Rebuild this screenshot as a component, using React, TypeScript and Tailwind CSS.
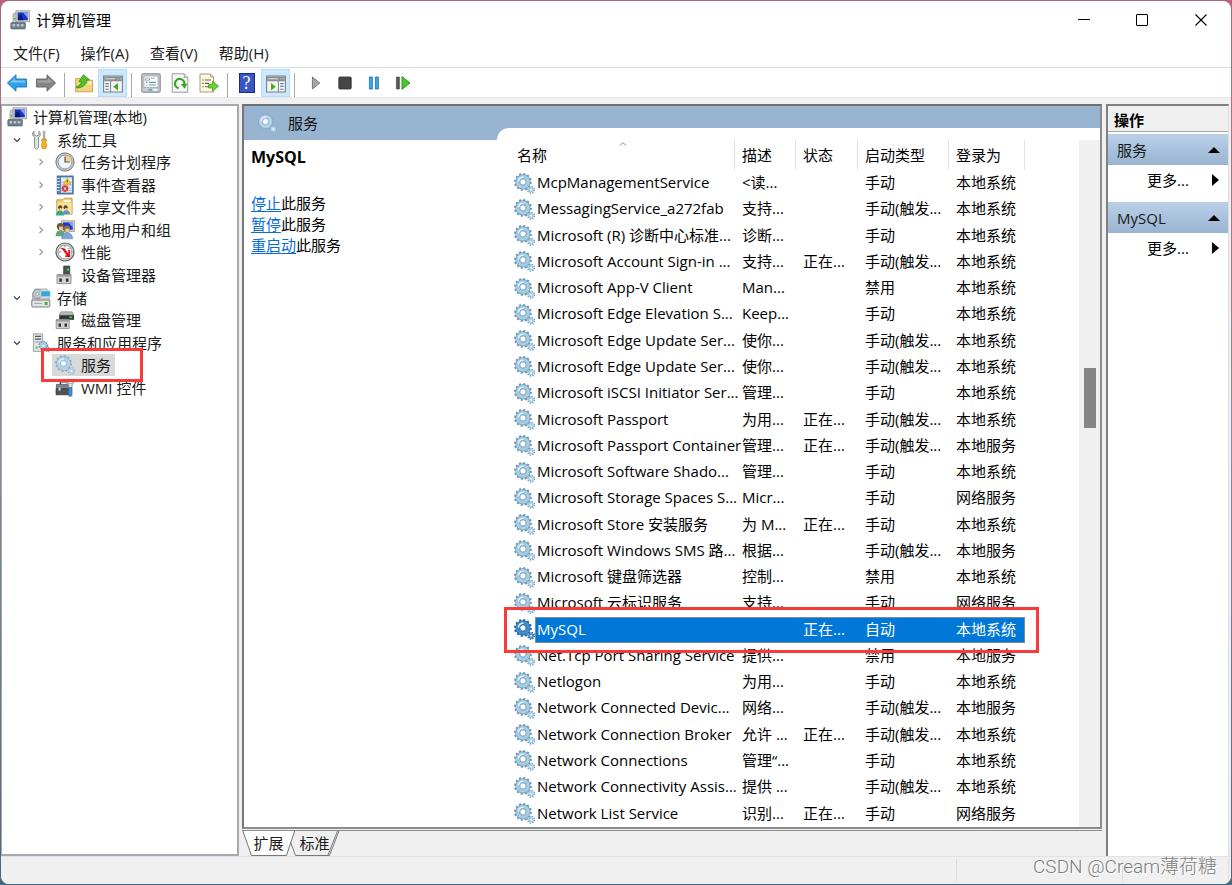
import React from 'react';
import clsx from 'clsx';

interface Service {
  name: string;
  desc: string;
  status?: string;
  startup: string;
  logon: string;
}

interface TreeNode {
  label: string;
  depth: 0 | 1 | 2;
  icon: React.ReactNode;
  open?: boolean;
  closed?: boolean;
  selected?: boolean;
}

const MANUAL = '手动';
const TRIGGER = '手动(触发...';
const RUNNING = '正在...';
const SYSTEM = '本地系统';
const LOCAL = '本地服务';
const NETWORK = '网络服务';

const services: Service[] = [
  { name: 'McpManagementService', desc: '<读...', startup: MANUAL, logon: SYSTEM },
  { name: 'MessagingService_a272fab', desc: '支持...', startup: TRIGGER, logon: SYSTEM },
  { name: 'Microsoft (R) 诊断中心标准...', desc: '诊断...', startup: MANUAL, logon: SYSTEM },
  { name: 'Microsoft Account Sign-in ...', desc: '支持...', status: RUNNING, startup: TRIGGER, logon: SYSTEM },
  { name: 'Microsoft App-V Client', desc: 'Man...', startup: '禁用', logon: SYSTEM },
  { name: 'Microsoft Edge Elevation S...', desc: 'Keep...', startup: MANUAL, logon: SYSTEM },
  { name: 'Microsoft Edge Update Ser...', desc: '使你...', startup: TRIGGER, logon: SYSTEM },
  { name: 'Microsoft Edge Update Ser...', desc: '使你...', startup: TRIGGER, logon: SYSTEM },
  { name: 'Microsoft iSCSI Initiator Ser...', desc: '管理...', startup: MANUAL, logon: SYSTEM },
  { name: 'Microsoft Passport', desc: '为用...', status: RUNNING, startup: TRIGGER, logon: SYSTEM },
  { name: 'Microsoft Passport Container', desc: '管理...', status: RUNNING, startup: TRIGGER, logon: LOCAL },
  { name: 'Microsoft Software Shado...', desc: '管理...', startup: MANUAL, logon: SYSTEM },
  { name: 'Microsoft Storage Spaces S...', desc: 'Micr...', startup: MANUAL, logon: NETWORK },
  { name: 'Microsoft Store 安装服务', desc: '为 M...', status: RUNNING, startup: MANUAL, logon: SYSTEM },
  { name: 'Microsoft Windows SMS 路...', desc: '根据...', startup: TRIGGER, logon: LOCAL },
  { name: 'Microsoft 键盘筛选器', desc: '控制...', startup: '禁用', logon: SYSTEM },
  { name: 'Microsoft 云标识服务', desc: '支持...', startup: MANUAL, logon: NETWORK },
  { name: 'MySQL', desc: '', status: RUNNING, startup: '自动', logon: SYSTEM },
  { name: 'Net.Tcp Port Sharing Service', desc: '提供...', startup: '禁用', logon: LOCAL },
  { name: 'Netlogon', desc: '为用...', startup: MANUAL, logon: SYSTEM },
  { name: 'Network Connected Devic...', desc: '网络...', startup: TRIGGER, logon: LOCAL },
  { name: 'Network Connection Broker', desc: '允许 ...', status: RUNNING, startup: TRIGGER, logon: SYSTEM },
  { name: 'Network Connections', desc: '管理“...', startup: MANUAL, logon: SYSTEM },
  { name: 'Network Connectivity Assis...', desc: '提供 ...', startup: TRIGGER, logon: SYSTEM },
  { name: 'Network List Service', desc: '识别...', status: RUNNING, startup: MANUAL, logon: NETWORK },
];

const Svg = ({ children, className = 'size-5' }: { children: React.ReactNode; className?: string }) => (
  <svg viewBox="0 0 20 20" className={clsx('shrink-0', className)} aria-hidden="true">
    {children}
  </svg>
);

// Large gear with a small one at the lower right
const GearIcon = ({ active, pale, className }: { active?: boolean; pale?: boolean; className?: string }) => {
  const body = active ? '#3f8fce' : pale ? '#b3d3ea' : '#a5cde6';
  const edge = active ? '#24659f' : pale ? '#88aecb' : '#6f98b3';
  return (
    <Svg className={className}>
      <circle cx="8.5" cy="8.5" r="7.5" fill="none" stroke={edge} strokeWidth="2" strokeDasharray="2 1.93" />
      <circle cx="8.5" cy="8.5" r="5" fill="none" stroke={edge} strokeWidth="4.4" />
      <circle cx="8.5" cy="8.5" r="4.9" fill="none" stroke={body} strokeWidth="3.4" />
      <path d="M4.2 8A4.5 4.5 0 0 1 9 4" fill="none" stroke="#e0f2fb" strokeWidth="1.5" />
      <circle cx="8.5" cy="8.5" r="2.9" fill={active ? '#f4faff' : '#fff'} stroke={edge} strokeWidth="0.7" />
      <circle cx="16.3" cy="16" r="3.1" fill="none" stroke={edge} strokeWidth="1.5" strokeDasharray="1.2 1.23" />
      <circle cx="16.3" cy="16" r="1.8" fill="#fff" stroke={body} strokeWidth="1.8" />
    </Svg>
  );
};

const ComputerIcon = () => (
  <Svg>
    <path d="M3 4l4-2v13H3z" fill="#c9cdc8" stroke="#8d918d" strokeWidth="0.7" />
    <rect x="6" y="0.8" width="13.4" height="11" fill="#d9d9d2" stroke="#96968f" strokeWidth="0.8" />
    <rect x="7.6" y="2.4" width="10.2" height="7.8" fill="#1a35c8" />
    <path d="M13 2.4h4.8v5.5z" fill="#88a7f5" />
    <path d="M8 10.2c0-4 1.8-6 3.6-6l2 6z" fill="#0b1a6e" />
    <path d="M11 11.8h4l1 3h-6z" fill="#b3b5b2" />
    <rect x="0.8" y="12.6" width="14.5" height="6.4" rx="0.8" fill="#6d7d88" stroke="#4b5860" strokeWidth="0.6" />
    <path d="M2.5 14h2.6v2.6H2.5zM6.7 14h2.6v2.6H6.7zM10.9 14h2.6v2.6h-2.6z" fill="#b9c6cd" />
    <path d="M3.8 8h1.4v1.6H3.8z" fill="#3bb54a" />
  </Svg>
);

const ToolsIcon = () => (
  <Svg>
    <path
      d="M3 1.2C1.8 2.2 1.3 3.6 1.8 5c.3 1 1 1.7 1.8 2.1V17c0 2.6 4 2.6 4 0V7.1C9.6 6 10 3 7.9 1.2v3.6L5.5 6 3 4.8z"
      fill="#dfe3e4"
      stroke="#7d8385"
      strokeWidth="0.9"
    />
    <path d="M12.3 1.2h1.6V9h-1.6z" fill="#b9bec0" stroke="#83898b" strokeWidth="0.6" />
    <path d="M10.8 9.2h4.6v2.2l-.9 1.2.9 1.2v3.6c0 1.8-4.6 1.8-4.6 0v-3.6l.9-1.2-.9-1.2z" fill="#f8b21c" stroke="#c37e05" strokeWidth="0.7" />
  </Svg>
);

const ClockIcon = () => (
  <Svg>
    <circle cx="10" cy="10" r="9.1" fill="#c7c7c7" stroke="#777" strokeWidth="1" />
    <circle cx="10" cy="10" r="6.9" fill="#eef5fb" stroke="#8c8c8c" strokeWidth="0.8" />
    <path d="M10 3.4A6.6 6.6 0 0 1 16.6 10H10z" fill="#f7cf86" />
    <path d="M10 4.6V10h4.6" fill="none" stroke="#47535d" strokeWidth="1.2" />
  </Svg>
);

const EventIcon = () => (
  <Svg>
    <rect x="2.2" y="1" width="16" height="18" fill="#5d83b5" stroke="#3b5d8b" strokeWidth="0.8" />
    <rect x="6" y="2.4" width="11" height="15.2" fill="#e2ecf8" />
    <path d="M6 7.2h11M6 10h11M6 13h11M6 15.6h11" stroke="#8fb0da" strokeWidth="0.8" />
    <path d="M1.2 3.5h3.4M1.2 6.5h3.4M1.2 9.5h3.4M1.2 12.5h3.4M1.2 15.5h3.4" stroke="#d5dde6" strokeWidth="1.2" />
    <path d="M12.2 3l3.8 6.2H8.4z" fill="#ffd81f" stroke="#bd9000" strokeWidth="0.6" />
    <path d="M12.2 5v2.6" stroke="#333" strokeWidth="0.9" />
    <circle cx="10" cy="13.6" r="3.3" fill="#dd3636" />
    <path d="M8.7 12.3l2.6 2.6m0-2.6l-2.6 2.6" stroke="#fff" strokeWidth="1" />
  </Svg>
);

const SharedIcon = () => (
  <Svg>
    <path d="M1.8 2.8h6l1.5-1.6h7.8v16H1.8z" fill="#f2cf72" stroke="#b48f38" strokeWidth="0.8" />
    <path d="M8.6 3h7.4v2H8.6z" fill="#fff8df" />
    <path d="M2.4 5.8h14.2v11H2.4z" fill="#fbe29b" />
    <circle cx="5.2" cy="10.4" r="2.1" fill="#5c4631" />
    <circle cx="10.6" cy="10.4" r="2.1" fill="#5c4631" />
    <path d="M4.6 11h2v2h-2zM10 11h2v2h-2z" fill="#edbf93" />
    <path d="M1 18.4c0-6.4 8-6.4 8 0z" fill="#35a884" />
    <path d="M7.6 17c.2-5.2 7.4-5 7.4 0z" fill="#5698cf" />
  </Svg>
);

const UsersIcon = () => (
  <Svg>
    <rect x="6.4" y="0.8" width="13" height="10.6" fill="#dadad4" stroke="#96968f" strokeWidth="0.8" />
    <rect x="8" y="2.4" width="9.8" height="7.4" fill="#1936cf" />
    <path d="M13.4 2.4h4.4v5z" fill="#8aa8f4" />
    <circle cx="5.4" cy="6.6" r="3.6" fill="#6b5b38" />
    <path d="M4 6.4h4v3.8H4z" fill="#ebc08f" />
    <path d="M0.6 16.2c0-8 9.6-8 9.6 0z" fill="#64a37c" />
    <circle cx="11.8" cy="8.8" r="3.4" fill="#8d6f49" />
    <path d="M10.4 8.8h4v3.6h-4z" fill="#f0c89d" />
    <path d="M6.6 18.8c0-8.4 11-8.4 11 0z" fill="#7ba7d6" stroke="#527fae" strokeWidth="0.5" />
  </Svg>
);

const GaugeIcon = () => (
  <Svg>
    <circle cx="10" cy="10" r="9" fill="#d5d5d5" stroke="#5f5f5f" strokeWidth="1.2" />
    <circle cx="10" cy="10" r="6.9" fill="#fff" stroke="#8a8a8a" strokeWidth="0.8" />
    <path d="M5.6 6l1 1M4.2 10h1.5M14.4 6l-1 1M15.8 10h-1.5M10 3.8v1.5" stroke="#444" strokeWidth="0.8" />
    <path d="M5.8 5.4l4 1 3.4 5V8h1.8v7h-4.4l-.6-1.6 1.6-.2z" fill="#e0161b" />
  </Svg>
);

const DeviceIcon = () => (
  <Svg>
    <path d="M8.6 1h6.2v10H8.6z" fill="#4c4f50" stroke="#2e3031" strokeWidth="0.6" />
    <path d="M11.6 3.6H14v2h-2.4z" fill="#4ae03c" />
    <path d="M2 9.6h14v9H2z" fill="#cfd0d0" stroke="#808282" strokeWidth="0.8" />
    <path d="M2 9.6h14v2H2z" fill="#9a9c9c" />
    <path d="M4.4 13.4h2.4v3.4H4.4zM11 13.4h2.4v3.4H11z" fill="#2c2f31" />
  </Svg>
);

const StorageIcon = () => (
  <Svg>
    <path d="M2 5l2-4h12l2.4 10H1.4z" fill="#d6d9da" stroke="#989c9e" strokeWidth="0.8" />
    <circle cx="6.4" cy="6" r="4.6" fill="#bfc5c8" stroke="#7f868a" strokeWidth="0.8" />
    <circle cx="6.4" cy="6" r="1.5" fill="#fff" stroke="#7f868a" strokeWidth="0.6" />
    <path d="M9.8 2.8h9.6v6H9.8z" fill="#39a7d2" stroke="#e4f2f8" strokeWidth="0.6" />
    <path d="M0.8 12h18v6.2c0 .5-.5.8-1 .8H1.8c-.5 0-1-.3-1-.8z" fill="#e3e5e5" stroke="#6d7072" strokeWidth="0.9" />
    <path d="M13.6 14h3v3h-3z" fill="#4fae2c" />
    <path d="M3 15.4h8" stroke="#a1a4a5" strokeWidth="1" />
  </Svg>
);

const DiskIcon = () => (
  <Svg>
    <path d="M5.6 1.8h11.6l1.6 3.4H4.2z" fill="#b6b9ba" stroke="#808384" strokeWidth="0.6" />
    <path d="M4.2 5.2h14.8v4.6H4.2z" fill="#323637" />
    <path d="M14.4 6.4h2.8v1.8h-2.8z" fill="#44d63a" />
    <path d="M1.2 9.6h13v9h-13z" fill="#d0d1d1" stroke="#808282" strokeWidth="0.8" />
    <path d="M1.2 9.6h13v2h-13z" fill="#9a9c9c" />
    <path d="M3.6 13.4H6v3.4H3.6zM9.6 13.4H12v3.4H9.6z" fill="#2c2f31" />
  </Svg>
);

const ServerIcon = () => (
  <Svg>
    <path d="M2.4 0.8h9v17.6h-9z" fill="#e0e4e6" stroke="#8a9195" strokeWidth="0.8" />
    <path d="M4 3.4h6M4 6.2h6" stroke="#52585c" strokeWidth="1.2" />
    <path d="M4 9h6" stroke="#9ba2a6" strokeWidth="1" />
    <path d="M4.6 13.6h2v2h-2z" fill="#48b83c" />
    <circle cx="12.4" cy="12.6" r="4" fill="#b6d5ea" stroke="#6997ba" strokeWidth="1.6" strokeDasharray="1.6 1" />
    <circle cx="12.4" cy="12.6" r="1.6" fill="#fff" stroke="#6997ba" strokeWidth="0.6" />
    <circle cx="16.8" cy="16.6" r="2.2" fill="#dcecf6" stroke="#6997ba" strokeWidth="1.3" strokeDasharray="1.1 0.8" />
  </Svg>
);

const WmiIcon = () => (
  <Svg>
    <path d="M5.4 6.4V3.6h7.2v2.8" fill="none" stroke="#43494c" strokeWidth="1.6" />
    <path d="M1.4 6.4h15v4.4h-15z" fill="#7b8387" stroke="#474d50" strokeWidth="0.7" />
    <path d="M1 10.8h15.6v6H1z" fill="#4d5456" stroke="#33383a" strokeWidth="0.7" />
    <path d="M3.6 9.6h2v3h-2z" fill="#d6dadb" />
    <path d="M13 1.4c-1.6 1.8-1.4 4.4.6 5.4v3h3.4v-3c2-1 2.4-3.6.6-5.4v3.2l-2.2 1-2.2-1z" fill="#dfe4e6" stroke="#7d8385" strokeWidth="0.7" />
    <path d="M13.6 9.6H17v7.2c0 2.4-3.4 2.4-3.4 0z" fill="#4b8cd2" stroke="#2c62a0" strokeWidth="0.6" />
  </Svg>
);

const BackIcon = () => (
  <Svg>
    <path d="M0.4 10L9 1.8V6h10.6v8H9v4.2z" fill="#2e9fe8" stroke="#1a73b8" strokeWidth="0.9" />
    <path d="M3 9.6l5-4.6v2.4h10.2v2.2z" fill="#7cc8fa" />
  </Svg>
);

const ForwardIcon = () => (
  <Svg>
    <path d="M19.6 10L11 1.8V6H0.4v8H11v4.2z" fill="#858585" stroke="#606060" strokeWidth="0.9" />
    <path d="M17 9.6l-5-4.6v2.4H1.6v2.2z" fill="#a3a3a3" />
  </Svg>
);

const FolderUpIcon = () => (
  <Svg>
    <path d="M1.6 5.4h5l1.4 1.8h10.6v11.6h-17z" fill="#f3d27c" stroke="#b78c31" strokeWidth="0.7" />
    <path d="M14.6 8.4h2.8v3h-2.8z" fill="#fff6dc" />
    <path d="M2.6 13.4c3-.4 4.4-2.2 4.8-4.8H4.8l4.6-6.8 6 4.8-2.6.6c-.6 4.6-4.2 7.8-10.2 7.8z" fill="#4fc22c" stroke="#2c8712" strokeWidth="0.7" />
  </Svg>
);

const PaneIcon = ({ flip }: { flip?: boolean }) => (
  <Svg>
    <path d="M0.6 3h18.8v16H0.6z" fill="#f4f4f4" stroke="#7b8083" strokeWidth="1.1" />
    <path d="M1.2 3.6h17.6v4.6H1.2z" fill="#868c90" />
    <path d="M2.4 5.8h10M14.6 5.8h1M16.8 5.8h1" stroke="#e6e9ea" strokeWidth="1" />
    {flip ? (
      <>
        <path d="M12.4 8v11" stroke="#7b8083" strokeWidth="1" />
        <path d="M14.2 10.6h3.4M14.2 13.4h3.4M14.2 16.2h3.4" stroke="#5582b4" strokeWidth="1.1" />
        <path d="M5 10v7.4l4.8-3.7z" fill="#3fae1d" />
      </>
    ) : (
      <>
        <path d="M7.6 8v11" stroke="#7b8083" strokeWidth="1" />
        <path d="M2.4 10.6h3.4M2.4 13.4h3.4M2.4 16.2h3.4" stroke="#5582b4" strokeWidth="1.1" />
        <path d="M15 10v7.4l-4.8-3.7z" fill="#3fae1d" />
      </>
    )}
  </Svg>
);

const PropertiesIcon = () => (
  <Svg>
    <rect x="0.8" y="0.8" width="18.4" height="18.4" rx="1.2" fill="#c9ced2" stroke="#7b8083" strokeWidth="1" />
    <path d="M3 3h14v11.6H3z" fill="#fff" stroke="#90989e" strokeWidth="0.7" />
    <path d="M4.6 5.2h4v2h-4zM10 5.2h4" stroke="#90989e" strokeWidth="0.8" fill="none" />
    <path d="M5 9.4h1.6M8 9.4h7M5 12h1.6M8 12h7" stroke="#6d94c0" strokeWidth="1.1" />
    <path d="M7.4 16h3.6v1.8H7.4z" fill="#39a8e0" />
    <path d="M12.4 16H16v1.8h-3.6z" fill="#f4f6f7" />
  </Svg>
);

const RefreshIcon = () => (
  <Svg>
    <path d="M2.2 0.8h12l3.6 3.6v14.8H2.2z" fill="#f5f6f6" stroke="#8d9295" strokeWidth="0.9" />
    <path d="M14.2 0.8v3.6h3.6" fill="#d6dadc" stroke="#8d9295" strokeWidth="0.8" />
    <path d="M8.6 15.2A4.7 4.7 0 1 1 14.4 11" fill="none" stroke="#36a51c" strokeWidth="2.2" />
    <path d="M10.8 11l6.4-.2-2.4 5z" fill="#36a51c" />
  </Svg>
);

const ExportIcon = () => (
  <Svg>
    <path d="M1 1h10.6l3 3v15H1z" fill="#fcf6dc" stroke="#98927b" strokeWidth="0.9" />
    <path d="M11.6 1v3h3" fill="#e6dfc0" stroke="#98927b" strokeWidth="0.8" />
    <path d="M3.2 7h1.4M6 7h6M3.2 10.4h1.4M6 10.4h4M3.2 13.8h1.4M6 13.8h4" stroke="#66635a" strokeWidth="1.1" />
    <path d="M9.6 11.4h4V8.2l6 5-6 5V15h-4z" fill="#6bd035" stroke="#3d9a16" strokeWidth="0.7" />
  </Svg>
);

const HelpIcon = () => (
  <span className="flex h-5 w-4 items-center justify-center border border-[#1b2a80] bg-[#3857c4] font-['Liberation_Serif',serif] text-lg leading-none text-white">
    ?
  </span>
);

const PlayIcon = () => (
  <Svg>
    <path d="M6.4 4v12l7.4-6z" fill="#a6a6a6" stroke="#777" strokeWidth="1" />
  </Svg>
);

const StopIcon = () => (
  <Svg>
    <rect x="3.8" y="4" width="12.4" height="12" rx="1" fill="#454545" stroke="#2f2f2f" strokeWidth="0.8" />
  </Svg>
);

const PauseIcon = () => (
  <Svg>
    <path d="M5.4 4h3v12h-3zM11.4 4h3v12h-3z" fill="#3da5ec" stroke="#1b70b8" strokeWidth="0.8" />
  </Svg>
);

const RestartIcon = () => (
  <Svg>
    <path d="M3.4 4h3v12h-3z" fill="#585858" stroke="#3c3c3c" strokeWidth="0.6" />
    <path d="M9 3.6v12.8l8-6.4z" fill="#48c72f" stroke="#2b9018" strokeWidth="0.9" />
  </Svg>
);

const tree: TreeNode[] = [
  { label: '计算机管理(本地)', depth: 0, icon: <ComputerIcon /> },
  { label: '系统工具', depth: 1, icon: <ToolsIcon />, open: true },
  { label: '任务计划程序', depth: 2, icon: <ClockIcon />, closed: true },
  { label: '事件查看器', depth: 2, icon: <EventIcon />, closed: true },
  { label: '共享文件夹', depth: 2, icon: <SharedIcon />, closed: true },
  { label: '本地用户和组', depth: 2, icon: <UsersIcon />, closed: true },
  { label: '性能', depth: 2, icon: <GaugeIcon />, closed: true },
  { label: '设备管理器', depth: 2, icon: <DeviceIcon /> },
  { label: '存储', depth: 1, icon: <StorageIcon />, open: true },
  { label: '磁盘管理', depth: 2, icon: <DiskIcon /> },
  { label: '服务和应用程序', depth: 1, icon: <ServerIcon />, open: true },
  { label: '服务', depth: 2, icon: <GearIcon pale />, selected: true },
  { label: 'WMI 控件', depth: 2, icon: <WmiIcon /> },
];

const indent = ['pl-1', 'pl-1.5', 'pl-[30px]'];

const TreeRow = ({ node }: { node: TreeNode }) => (
  <li className={clsx('relative flex flex-1 items-center', indent[node.depth])}>
    {node.depth > 0 && (
      <span className="flex w-[22px] shrink-0 justify-start pl-1">
        {node.open && (
          <svg viewBox="0 0 8 8" className="size-2 fill-none stroke-[#444]">
            <path d="M1 2.5l3 3 3-3" strokeWidth="1.2" />
          </svg>
        )}
        {node.closed && (
          <svg viewBox="0 0 8 8" className="size-2 fill-none stroke-[#9a9a9a]">
            <path d="M2.5 1l3 3-3 3" strokeWidth="1.2" />
          </svg>
        )}
      </span>
    )}
    <button
      className={clsx(
        'flex h-[22px] items-center gap-1.5 pr-1 whitespace-nowrap',
        node.selected && 'bg-[#d9d9d9] shadow-[-3px_0_0_#d9d9d9]',
      )}
    >
      {node.icon}
      {node.label}
    </button>
    {node.selected && (
      <span className="pointer-events-none absolute -inset-y-1.5 left-[38px] z-10 w-[102px] border-3 border-[#fa3a38]" />
    )}
  </li>
);

const ToolButton = ({ label, on, children }: { label: string; on?: boolean; children: React.ReactNode }) => (
  <button
    aria-label={label}
    className={clsx(
      'flex h-7 w-[29px] items-center justify-center border',
      on ? 'border-[#b5dcf8] bg-[#cce8ff]' : 'border-transparent',
    )}
  >
    {children}
  </button>
);

const Separator = () => <span className="mx-1 h-6 w-px bg-[#a8a8a8]" />;

const Toolbar = () => (
  <div className="flex h-[29px] items-end pl-px">
    <ToolButton label="后退"><BackIcon /></ToolButton>
    <ToolButton label="前进"><ForwardIcon /></ToolButton>
    <Separator />
    <ToolButton label="上一级"><FolderUpIcon /></ToolButton>
    <ToolButton label="控制台树" on><PaneIcon /></ToolButton>
    <Separator />
    <ToolButton label="属性"><PropertiesIcon /></ToolButton>
    <ToolButton label="刷新"><RefreshIcon /></ToolButton>
    <ToolButton label="导出列表"><ExportIcon /></ToolButton>
    <Separator />
    <ToolButton label="帮助"><HelpIcon /></ToolButton>
    <ToolButton label="操作窗格" on><PaneIcon flip /></ToolButton>
    <Separator />
    <div className="flex pl-0.5">
      <ToolButton label="启动"><PlayIcon /></ToolButton>
      <ToolButton label="停止"><StopIcon /></ToolButton>
      <ToolButton label="暂停"><PauseIcon /></ToolButton>
      <ToolButton label="重启动"><RestartIcon /></ToolButton>
    </div>
  </div>
);

const TitleBar = () => (
  <header className="flex h-[37px] items-center justify-between pl-[9px] text-black">
    <div className="flex items-center gap-1.5">
      <ComputerIcon />
      <h1>计算机管理</h1>
    </div>
    <div className="flex h-full">
      <button aria-label="最小化" className="flex h-full w-[58px] items-center justify-center">
        <span className="h-px w-3 bg-black" />
      </button>
      <button aria-label="最大化" className="flex h-full w-[58px] items-center justify-center">
        <span className="size-3 rounded-[1px] border border-black" />
      </button>
      <button aria-label="关闭" className="flex h-full w-[60px] items-center justify-center">
        <svg viewBox="0 0 12 12" className="size-3 stroke-black">
          <path d="M0.5 0.5l11 11M11.5 0.5l-11 11" strokeWidth="1.1" />
        </svg>
      </button>
    </div>
  </header>
);

const headCell = 'h-[30px] border-r border-[#e2e2e2] p-0 pl-[7px] text-left font-normal';

const Cell = ({ text, selected, last }: { text?: string; selected: boolean; last?: boolean }) => (
  <td className="p-0">
    <div
      className={clsx(
        'h-[26px] border-y pl-[7px] leading-[22px] whitespace-nowrap',
        selected ? 'border-[#7f8b95] bg-[#0078d7] text-white' : 'border-transparent',
        selected && last && 'border-r',
      )}
    >
      {text}
    </div>
  </td>
);

const ServiceTable = () => (
  <table className="h-full w-[520px] table-fixed border-separate border-spacing-0 text-black">
    <colgroup>
      <col />
      <col className="w-[61px]" />
      <col className="w-[62px]" />
      <col className="w-[91px]" />
      <col className="w-[76px]" />
    </colgroup>
    <thead>
      <tr className="h-[30px]">
        <th className={clsx(headCell, 'relative')}>
          <span className="pl-[5px]">名称</span>
          <svg viewBox="0 0 8 4" className="absolute top-0.5 left-[114px] h-1 w-2 fill-none stroke-[#888]">
            <path d="M1 3.5l3-3 3 3" />
          </svg>
        </th>
        <th className={headCell}>描述</th>
        <th className={headCell}>状态</th>
        <th className={headCell}>启动类型</th>
        <th className={headCell}>登录为</th>
      </tr>
    </thead>
    <tbody>
      {services.map((s, i) => {
        const selected = s.name === 'MySQL';
        return (
          <tr key={i} className={clsx(selected && 'relative')}>
            <td className="p-0">
              <div className="flex h-[26px] items-center pl-[9px]">
                <GearIcon active={selected} className="size-[21px]" />
                <span
                  className={clsx(
                    'h-[26px] min-w-0 flex-1 border-y border-l pl-px leading-[22px] whitespace-nowrap',
                    selected ? 'border-[#7f8b95] bg-[#0078d7] text-white' : 'border-transparent',
                  )}
                >
                  {s.name}
                </span>
              </div>
              {selected && (
                <span className="pointer-events-none absolute -inset-y-2.5 -right-3.5 -left-px z-10 border-3 border-[#fa3a38]" />
              )}
            </td>
            <Cell text={s.desc} selected={selected} />
            <Cell text={s.status} selected={selected} />
            <Cell text={s.startup} selected={selected} />
            <Cell text={s.logon} selected={selected} last />
          </tr>
        );
      })}
    </tbody>
  </table>
);

const Link = ({ children }: { children: React.ReactNode }) => (
  <a href="#" className="text-[#0a6cd6] underline underline-offset-2">
    {children}
  </a>
);

const DetailPane = () => (
  <section className="flex min-w-0 flex-1 flex-col">
    <div className="flex min-h-0 flex-1 flex-col border-2 border-t-[#6f6f6f] border-r-[#8c8c8c] border-b-[#8c8c8c] border-l-[#777] bg-white">
      <div className="flex h-[34px] shrink-0 items-center gap-[11px] bg-[#99b4d1] pl-[13px] text-[#111]">
        <GearIcon pale />
        <h2>服务</h2>
      </div>
      <div className="flex min-h-0 flex-1">
        <div className="w-[253px] shrink-0 pt-1.5 pl-[7px] text-black">
          <h3 className="text-base leading-[22px] font-bold">MySQL</h3>
          <div className="pt-[25px] leading-[21px]">
            <p><Link>停止</Link>此服务</p>
            <p><Link>暂停</Link>此服务</p>
            <p><Link>重启动</Link>此服务</p>
          </div>
        </div>
        <div className="-mt-3 flex min-w-0 flex-1 rounded-tl-xl bg-white pt-3 pl-2">
          <div className="min-w-0 flex-1">
            <ServiceTable />
          </div>
          <div className="flex w-[21px] flex-col items-center bg-[#f0f0f0] pt-[228px]">
            <span className="h-[60px] w-3 bg-[#858585]" />
          </div>
        </div>
      </div>
    </div>
    <div className="mt-px flex border-t border-[#8c8c8c]">
      <button className="relative h-[25px] w-[53px] pb-0.5">
        <svg viewBox="0 0 53 25" className="absolute inset-0 size-full fill-white stroke-[#777]">
          <path d="M0.5 -1L9.5 24.5h35L53 -1" />
        </svg>
        <span className="relative">扩展</span>
      </button>
      <button className="relative -ml-1.5 h-[25px] w-[51px] pb-0.5">
        <svg viewBox="0 0 51 25" className="absolute inset-0 size-full fill-none stroke-[#777]">
          <path d="M1.5 11L6.5 24.5h34L50 0" />
          <path d="M39 24L48.5 0" />
        </svg>
        <span className="relative">标准</span>
      </button>
    </div>
  </section>
);

const ActionGroup = ({ title }: { title: string }) => (
  <div>
    <button className="flex h-[31px] w-full items-center justify-between bg-linear-to-b from-[#bad0e8] to-[#99b4d1] pr-2 pl-[9px] text-[#1a1a1a]">
      {title}
      <svg viewBox="0 0 12 6" className="h-1.5 w-3 fill-black"><path d="M6 0l6 6H0z" /></svg>
    </button>
    <button className="flex h-[30px] w-full items-center justify-between pr-[9px] pl-[39px] text-black">
      更多...
      <svg viewBox="0 0 7 12" className="h-3 w-[7px] fill-black"><path d="M0 0l7 6-7 6z" /></svg>
    </button>
  </div>
);

const ActionPane = () => (
  <aside className="mr-0.5 w-[123px] shrink-0 border-t-2 border-r border-l-2 border-[#808080] border-r-[#dcdcdc] bg-white">
    <h2 className="mb-0.5 h-[26px] border-b border-[#a5a5a5] bg-[#f0f0f0] pl-1.5 leading-7 font-bold text-black">操作</h2>
    <div className="flex flex-col gap-[7px]">
      <ActionGroup title="服务" />
      <ActionGroup title="MySQL" />
    </div>
  </aside>
);

const App: React.FC = () => (
  <div className="h-screen bg-linear-to-b from-[#b0657c] via-[#8b8ca0] to-[#46687c] p-px font-['Open_Sans','Noto_Sans_CJK_SC',sans-serif] text-[15px] leading-5 text-[#1a1a1a]">
    <div className="relative flex h-full flex-col overflow-hidden rounded-lg bg-white">
      <TitleBar />
      <nav className="flex h-[29px] items-center gap-px pl-0.5">
        {['文件(F)', '操作(A)', '查看(V)', '帮助(H)'].map((m) => (
          <button key={m} className="px-2.5">{m}</button>
        ))}
      </nav>
      <div className="border-t border-[#d5dade]">
        <Toolbar />
      </div>
      <main className="flex min-h-0 flex-1 border-t border-[#e6e6e6] bg-[#f0f0f0] pt-1.5">
        <aside className="w-[238px] shrink-0 border-2 border-l border-[#a5a8b0] bg-white">
          <ul className="flex h-[293px] flex-col pl-px">
            {tree.map((node) => (
              <TreeRow key={node.label} node={node} />
            ))}
          </ul>
        </aside>
        <div className="w-[3px] shrink-0" />
        <DetailPane />
        <div className="w-1 shrink-0" />
        <ActionPane />
      </main>
      <footer className="flex h-7 shrink-0 justify-end border-t border-[#e2e2e2] bg-[#f0f0f0] py-0.5">
        <span className="w-[166px] border-l border-[#dedede]" />
        <span className="w-[107px] border-x border-[#dedede]" />
        <span className="w-0.5" />
      </footer>
      <span className="absolute right-3.5 bottom-[5px] font-['Roboto','Noto_Sans_CJK_SC',sans-serif] text-[19px] leading-6 font-light text-[#7d7d7d] [text-shadow:1px_1px_0_#fff]">
        CSDN @Cream薄荷糖
      </span>
    </div>
  </div>
);

export default App;
